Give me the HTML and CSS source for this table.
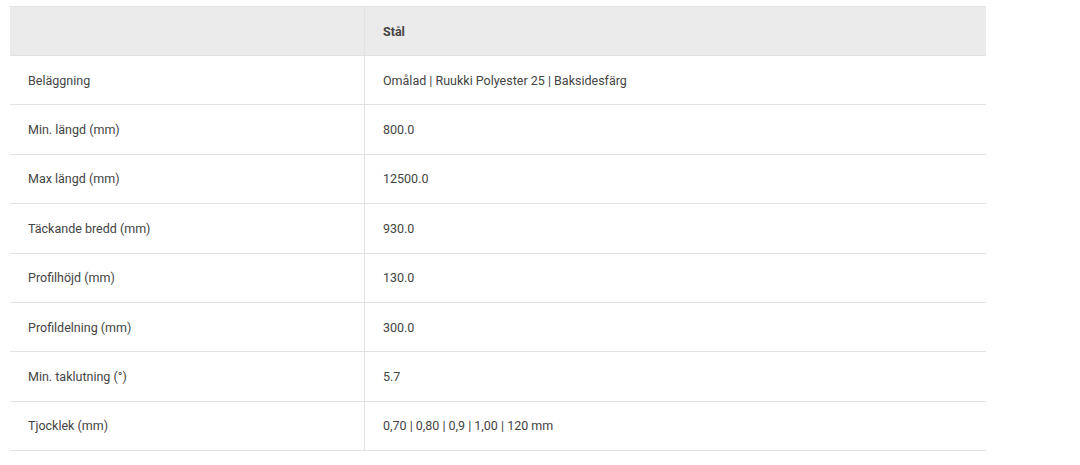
FILE: index.html
```html
<!DOCTYPE html>
<html lang="sv">
<head>
<meta charset="utf-8">
<link rel="stylesheet" href="styles.css">
</head>
<body>
<table class="spec">
  <thead>
    <tr><th class="label"></th><th class="value">Stål</th></tr>
  </thead>
  <tbody>
    <tr><td class="label">Beläggning</td><td class="value">Omålad | Ruukki Polyester 25 | Baksidesfärg</td></tr>
    <tr><td class="label">Min. längd (mm)</td><td class="value">800.0</td></tr>
    <tr><td class="label">Max längd (mm)</td><td class="value">12500.0</td></tr>
    <tr><td class="label">Täckande bredd (mm)</td><td class="value">930.0</td></tr>
    <tr><td class="label">Profilhöjd (mm)</td><td class="value">130.0</td></tr>
    <tr><td class="label">Profildelning (mm)</td><td class="value">300.0</td></tr>
    <tr><td class="label">Min. taklutning (°)</td><td class="value">5.7</td></tr>
    <tr><td class="label">Tjocklek (mm)</td><td class="value">0,70 | 0,80 | 0,9 | 1,00 | 120 mm</td></tr>
  </tbody>
</table>
</body>
</html>
```
FILE: styles.css
```css
html, body {
  margin: 0;
  padding: 0;
  background: #fff;
}
body {
  padding: 6px 0 0 10px;
  font-family: Roboto, "Liberation Sans", sans-serif;
  font-size: 12.5px;
  color: #444;
}
.spec {
  width: 976px;
  border-collapse: collapse;
  border-top: 1px solid #e2e2e2;
}
.spec th,
.spec td {
  text-align: left;
  padding: 0 18px;
  height: 48px;
  border-bottom: 1px solid #e2e2e2;
  vertical-align: middle;
}
.spec thead th {
  background: #ebebeb;
  font-weight: 700;
  height: 48px;
}
.spec .label {
  width: 318px;
  border-right: 1px solid #e2e2e2;
}
.spec tbody td {
  height: 48.4px;
}
```
